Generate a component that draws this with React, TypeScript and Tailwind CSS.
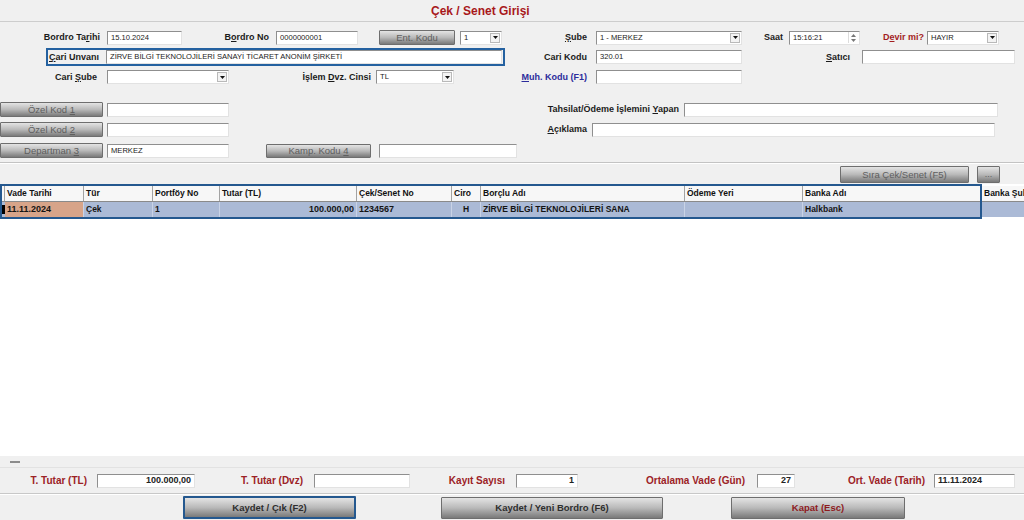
import React from "react";

type P = { className?: string; children?: React.ReactNode };

function Input({ className = "", children, right = false, bold = false }: P & { right?: boolean; bold?: boolean }) {
  return (
    <div
      className={
        "shrink-0 h-[14px] bg-white border border-[#e2e2e2] border-t-[#8f8f8f] border-l-[#8f8f8f] flex items-center px-[3px] overflow-hidden whitespace-nowrap text-[#222] " +
        (right ? "justify-end " : "") +
        (bold ? "font-bold text-[9px] " : "text-[7.6px] ") +
        className
      }
    >
      {children}
    </div>
  );
}

function Arrow() {
  return (
    <span className="ml-auto shrink-0 w-[10px] h-[10px] border border-[#b9b9b9] bg-[#f3f3f3] flex items-center justify-center">
      <svg width="5" height="3" viewBox="0 0 5 3">
        <path d="M0 0H5L2.5 3Z" fill="#111" />
      </svg>
    </span>
  );
}

function Select({ className = "", children }: P) {
  return (
    <div className={"shrink-0 h-[14px] bg-white border border-[#e2e2e2] border-t-[#8f8f8f] border-l-[#8f8f8f] flex items-center pl-[3px] pr-[1px] overflow-hidden whitespace-nowrap text-[7.6px] text-[#222] " + className}>
      <span>{children}</span>
      <Arrow />
    </div>
  );
}

function Label({ className = "", children }: P) {
  return <div className={"shrink-0 text-right font-bold text-[9px] leading-none whitespace-nowrap text-[#1b1b1b] " + className}>{children}</div>;
}

function Btn({ className = "", children }: P) {
  return (
    <div
      className={
        "shrink-0 flex items-center justify-center border border-[#6e6e6e] rounded-[1px] bg-linear-to-b from-[#e4e4e4] via-[#b9b9b9] to-[#7a7a7a] whitespace-nowrap leading-none " +
        className
      }
    >
      <span>{children}</span>
    </div>
  );
}

function Hd({ className = "", children }: P) {
  return (
    <div className={"shrink-0 h-full border-r border-[#a3a3a3] flex items-center px-[2px] overflow-hidden whitespace-nowrap " + className}>
      {children}
    </div>
  );
}

function Cell({ className = "", children }: P) {
  return (
    <div className={"shrink-0 h-full border-r border-[#c9d3e6] flex items-center px-[2px] overflow-hidden whitespace-nowrap " + className}>
      {children}
    </div>
  );
}

export default function App() {
  return (
    <div className="w-[1024px] h-[520px] bg-[#f0f0f0] overflow-hidden flex flex-col font-['Liberation_Sans',Arial,sans-serif] text-[#1b1b1b]">
      {/* title */}
      <div className="h-[22px] shrink-0 flex items-center pl-[431px] border-b border-[#cdcdcd]">
        <span className="text-[12px] font-bold text-[#a8181b]">Çek / Senet Girişi</span>
      </div>

      {/* row 1 */}
      <div className="mt-[8px] h-[15px] flex items-center shrink-0">
        <Label className="w-[100px]">
          Bordro Ta<u>r</u>ihi
        </Label>
        <Input className="ml-[7px] w-[75px]">15.10.2024</Input>
        <Label className="w-[87px]">
          B<u>o</u>rdro No
        </Label>
        <Input className="ml-[7px] w-[82px]">0000000001</Input>
        <Btn className="ml-[21px] w-[76px] h-[15px] text-[9.5px] text-[#5e5e5e]">Ent. Kodu</Btn>
        <Select className="ml-[5px] w-[42px]">1</Select>
        <Label className="w-[85px]">
          <u>Ş</u>ube
        </Label>
        <Select className="ml-[9px] w-[146px]">1 - MERKEZ</Select>
        <Label className="w-[41px]">Saat</Label>
        <div className="ml-[6px] shrink-0 w-[71px] h-[14px] bg-white border border-[#e2e2e2] border-t-[#8f8f8f] border-l-[#8f8f8f] flex items-center pl-[3px] pr-[1px] text-[7.6px] text-[#222]">
          <span>15:16:21</span>
          <span className="ml-auto w-[10px] h-[11px] flex flex-col items-center justify-center gap-[2px] border-l border-[#dcdcdc]">
            <svg width="5" height="3" viewBox="0 0 5 3">
              <path d="M0 3H5L2.5 0Z" fill="#777" />
            </svg>
            <svg width="5" height="3" viewBox="0 0 5 3">
              <path d="M0 0H5L2.5 3Z" fill="#777" />
            </svg>
          </span>
        </div>
        <Label className="w-[64px] text-[#a31d1f]">
          D<u>e</u>vir mi?
        </Label>
        <Select className="ml-[3px] w-[72px]">HAYIR</Select>
      </div>

      {/* row 2 */}
      <div className="mt-[3px] h-[18px] flex items-center shrink-0">
        <div className="ml-[46px] w-[459px] h-[18px] shrink-0 border-2 border-[#2461a0] flex items-center">
          <div className="w-[50px] shrink-0 font-bold text-[9px] leading-none whitespace-nowrap pl-[1px]">
            <u>Ç</u>ari Unvanı
          </div>
          <Input className="ml-[8px] w-[396px]">ZİRVE BİLGİ TEKNOLOJİLERİ SANAYİ TİCARET ANONİM ŞİRKETİ</Input>
        </div>
        <Label className="w-[82px]">Cari Kodu</Label>
        <Input className="ml-[9px] w-[146px]">320.01</Input>
        <Label className="w-[108px]">
          <u>S</u>atıcı
        </Label>
        <Input className="ml-[12px] w-[153px]" />
      </div>

      {/* row 3 */}
      <div className="mt-[4px] h-[14px] flex items-center shrink-0">
        <Label className="w-[97px]">
          Cari{" "}<u>Ş</u>ube
        </Label>
        <Select className="ml-[10px] w-[122px]" />
        <Label className="w-[142px]">
          İşlem{" "}<u>D</u>vz. Cinsi
        </Label>
        <Select className="ml-[5px] w-[78px]">TL</Select>
        <Label className="w-[133px] text-[#2c2c9c]">
          <u>M</u>uh. Kodu (F1)
        </Label>
        <Input className="ml-[9px] w-[146px]" />
      </div>

      {/* özel kod rows */}
      <div className="mt-[18px] h-[15px] flex items-center shrink-0">
        <Btn className="w-[103px] h-[15px] text-[9.5px] text-[#5e5e5e]">
          Özel Kod{" "}<u>1</u>
        </Btn>
        <Input className="ml-[4px] w-[122px]" />
        <Label className="w-[450px]">
          Tahsilat/Ödeme İşlemini{" "}<u>Y</u>apan
        </Label>
        <Input className="ml-[5px] w-[314px]" />
      </div>
      <div className="mt-[5px] h-[15px] flex items-center shrink-0">
        <Btn className="w-[103px] h-[15px] text-[9.5px] text-[#5e5e5e]">
          Özel Kod{" "}<u>2</u>
        </Btn>
        <Input className="ml-[4px] w-[122px]" />
        <Label className="w-[358px]">
          <u>A</u>çıklama
        </Label>
        <Input className="ml-[5px] w-[403px]" />
      </div>
      <div className="mt-[6px] h-[15px] flex items-center shrink-0">
        <Btn className="w-[103px] h-[15px] text-[9.5px] text-[#5e5e5e]">
          Departman{" "}<u>3</u>
        </Btn>
        <Input className="ml-[4px] w-[122px]">MERKEZ</Input>
        <Btn className="ml-[37px] w-[105px] h-[14px] text-[9.5px] text-[#5e5e5e]">
          Kamp. Kodu{" "}<u>4</u>
        </Btn>
        <Input className="ml-[8px] w-[138px]" />
      </div>

      {/* separator */}
      <div className="mt-[4px] shrink-0 h-[2px] border-t border-[#c3c3c3] border-b border-b-white" />

      {/* toolbar */}
      <div className="mt-[2px] h-[17px] flex items-center shrink-0">
        <Btn className="ml-[840px] w-[129px] h-[17px] text-[9.5px] text-[#5e5e5e]">Sıra Çek/Senet (F5)</Btn>
        <Btn className="ml-[8px] w-[23px] h-[17px] text-[9px] text-[#5e5e5e]">...</Btn>
      </div>

      {/* grid */}
      <div className="mt-[1px] relative shrink-0 h-[272px] bg-white pt-[2px]">
        <div className="h-[16px] flex bg-[#f7f7f7] border-b border-[#8a8a8a] font-bold text-[8.5px] text-[#111]">
          <Hd className="w-[5px] px-0" />
          <Hd className="w-[79px]">Vade Tarihi</Hd>
          <Hd className="w-[69px]">Tür</Hd>
          <Hd className="w-[67px]">Portföy No</Hd>
          <Hd className="w-[137px]">Tutar (TL)</Hd>
          <Hd className="w-[95px]">Çek/Senet No</Hd>
          <Hd className="w-[29px]">Ciro</Hd>
          <Hd className="w-[204px]">Borçlu Adı</Hd>
          <Hd className="w-[118px]">Ödeme Yeri</Hd>
          <Hd className="w-[179px]">Banka Adı</Hd>
          <Hd className="flex-1 border-r-0">Banka Şube</Hd>
        </div>
        <div className="h-[15px] flex bg-[#abbad6] font-bold text-[8.5px] text-[#141414]">
          <div className="w-[5px] shrink-0 h-full flex items-center">
            <div className="w-[5px] h-[9px] bg-black" />
          </div>
          <Cell className="w-[79px] bg-[#d7a489] text-[9px]">11.11.2024</Cell>
          <Cell className="w-[69px]">Çek</Cell>
          <Cell className="w-[67px]">1</Cell>
          <Cell className="w-[137px] justify-end text-[9px]">100.000,00</Cell>
          <Cell className="w-[95px] text-[9px]">1234567</Cell>
          <Cell className="w-[29px] justify-center">H</Cell>
          <Cell className="w-[204px]">ZİRVE BİLGİ TEKNOLOJİLERİ SANA</Cell>
          <Cell className="w-[118px]" />
          <Cell className="w-[179px]">Halkbank</Cell>
          <Cell className="flex-1 border-r-0" />
        </div>
        <div className="absolute left-0 top-0 w-[982px] h-[35px] border-2 border-[#24588f] pointer-events-none" />
      </div>

      {/* bottom strip */}
      <div className="shrink-0 h-[12px] border-b border-[#e2e2e2] pt-[5px]">
        <div className="ml-[10px] w-[10px] h-[2px] bg-[#8c8c8c]" />
      </div>

      {/* totals */}
      <div className="mt-[6px] h-[14px] flex items-center shrink-0">
        <Label className="w-[87px] text-[10px] text-[#9c2226]">T. Tutar (TL)</Label>
        <Input className="ml-[10px] w-[98px]" right bold>
          100.000,00
        </Input>
        <Label className="w-[108px] text-[10px] text-[#9c2226]">T. Tutar (Dvz)</Label>
        <Input className="ml-[11px] w-[96px]" />
        <Label className="w-[95px] text-[10px] text-[#9c2226]">Kayıt Sayısı</Label>
        <Input className="ml-[11px] w-[62px]" right bold>
          1
        </Input>
        <Label className="w-[167px] text-[10px] text-[#9c2226]">Ortalama Vade (Gün)</Label>
        <Input className="ml-[12px] w-[38px]" right bold>
          27
        </Input>
        <Label className="w-[130px] text-[10px] text-[#9c2226]">Ort. Vade (Tarih)</Label>
        <Input className="ml-[9px] w-[81px]" bold>
          11.11.2024
        </Input>
      </div>

      <div className="mt-[5px] shrink-0 h-[2px] border-t border-[#c8c8c8] border-b border-b-white" />

      {/* buttons */}
      <div className="mt-[1px] h-[23px] flex items-center shrink-0">
        <Btn className="ml-[183px] w-[173px] h-[23px] border-2 border-[#24588f] text-[9.5px] font-bold text-[#2e2e2e]">Kaydet / Çık (F2)</Btn>
        <Btn className="ml-[85px] w-[222px] h-[22px] text-[9.5px] font-bold text-[#2e2e2e]">Kaydet / Yeni Bordro (F6)</Btn>
        <Btn className="ml-[68px] w-[174px] h-[22px] text-[9.5px] font-bold text-[#8e1b1e]">Kapat (Esc)</Btn>
      </div>
    </div>
  );
}
